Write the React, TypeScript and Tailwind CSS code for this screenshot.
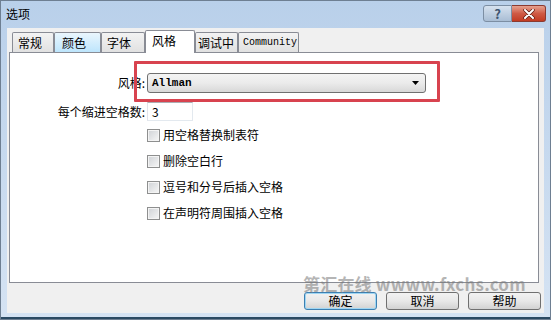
import React from "react";

const tabs = [
  { label: "常规", w: "w-[42px]", pl: "pl-[5px]" },
  { label: "颜色", w: "w-[47px]", pl: "pl-[7px]", hover: true },
  { label: "字体", w: "w-[44px]", pl: "pl-[5px]" },
  { label: "风格", w: "w-[50px]", pl: "pl-[6px]", active: true },
  { label: "调试中", w: "w-[43px]", pl: "pl-[2px]" },
  { label: "Community", w: "w-[61px]", pl: "pl-[4px]", mono: true },
];

const options = ["用空格替换制表符", "删除空白行", "逗号和分号后插入空格", "在声明符周围插入空格"];

function Tab({ t }: { t: (typeof tabs)[number] }) {
  const base = `flex items-center border border-[#898c95] border-b-0 rounded-t-[2px] leading-none text-black whitespace-nowrap ${t.pl} ${t.w}`;
  if (t.active)
    return <div className={`${base} h-[23px] -mb-px bg-white relative z-10 pb-[3px] text-[12px]`}>{t.label}</div>;
  return (
    <div
      className={`${base} h-[20px] ${
        t.hover
          ? "bg-gradient-to-b from-[#eaf6fd] to-[#bde5fc] border-[#3c7fb1]"
          : "bg-gradient-to-b from-[#f3f3f3] to-[#e1e1e1]"
      } ${t.mono ? "font-['Liberation_Mono',monospace] text-[10px]" : "text-[12px]"}`}
    >
      {t.label}
    </div>
  );
}

function Button({ label, primary }: { label: string; primary?: boolean }) {
  return (
    <div
      className={`w-[73px] h-[18px] flex items-center justify-center rounded-[3px] border text-[12px] leading-none bg-gradient-to-b from-[#f2f2f2] via-[#e8e8e8] to-[#d2d2d2] ${
        primary ? "border-[#3c7fb1] shadow-[inset_0_0_0_1px_#9fd6f3]" : "border-[#707070]"
      }`}
    >
      {label}
    </div>
  );
}

export default function App() {
  return (
    <div className="relative w-[551px] h-[320px] overflow-hidden bg-gradient-to-b from-[#b9d0ea] to-[#d5e3f3] border border-[#6e7f92] font-['Noto_Sans_CJK_SC','Noto_Sans',sans-serif] text-black">
      {/* title bar */}
      <div className="flex h-[27px] items-start pl-[5px] pr-[4px]">
        <div className="mt-[6px] text-[12px] leading-[14px]">选项</div>
        <div className="ml-auto mt-[4px] flex">
          <div className="w-[29px] h-[17px] flex items-center justify-center rounded-l-[3px] border border-[#7c8ea3] bg-gradient-to-b from-[#d6e2ef] to-[#a9bdd4] text-[13px] font-bold leading-none text-[#3e5570]">
            ?
          </div>
          <div className="w-[34px] h-[17px] flex items-center justify-center rounded-r-[3px] border border-l-0 border-[#8b3a30] bg-gradient-to-b from-[#e5a18f] via-[#cf5a45] to-[#c23b22]">
            <svg width="12" height="10" viewBox="0 0 12 10">
              <path d="M2 1 L10 9 M10 1 L2 9" stroke="#5a1a10" strokeWidth="3.4" strokeLinecap="round" />
              <path d="M2 1 L10 9 M10 1 L2 9" stroke="#ffffff" strokeWidth="2" strokeLinecap="round" />
            </svg>
          </div>
        </div>
      </div>

      {/* client area */}
      <div className="mx-[6px] h-[285px] bg-[#f0f0f0] flex flex-col pt-[2px]">
        <div className="flex items-end h-[22px] pl-[5px]">
          {tabs.map((t) => (
            <Tab key={t.label} t={t} />
          ))}
        </div>

        <div className="ml-[2px] mr-[5px] h-[231px] bg-white border border-[#898c95] pt-[20px] text-[12px]">
          <div className="flex items-center h-[20px]">
            <div className="w-[135px] text-right leading-none">风格:</div>
            <div className="ml-[2px] w-[279px] h-[20px] flex items-center rounded-[3px] border border-[#707070] bg-gradient-to-b from-[#f4f4f4] via-[#ebebeb] to-[#d8d8d8] pl-[4px] pr-[6px]">
              <span className="font-['Liberation_Mono',monospace] text-[11px] font-bold leading-none">Allman</span>
              <svg className="ml-auto" width="7" height="4" viewBox="0 0 7 4">
                <path d="M0 0 H7 L3.5 4 Z" fill="#000" />
              </svg>
            </div>
          </div>

          <div className="flex items-center h-[19px] mt-[9px]">
            <div className="w-[135px] text-right leading-none">每个缩进空格数:</div>
            <div className="ml-[2px] w-[46px] h-[19px] flex items-center border border-[#e3e9ef] border-t-[#abadb3] border-l-[#e2e3ea] pl-[4px] leading-none">
              3
            </div>
          </div>

          <div className="flex flex-col pl-[137px] mt-[1px]">
            {options.map((o) => (
              <div key={o} className="flex items-center h-[26px] gap-[3px]">
                <div className="w-[13px] h-[13px] border border-[#8e8f8f] bg-gradient-to-br from-[#cfd2d6] to-[#f7f7f7] shadow-[inset_0_0_0_1px_#f4f4f4]" />
                <span className="leading-none">{o}</span>
              </div>
            ))}
          </div>
        </div>

        <div className="flex justify-end gap-[9px] pr-[3px] mt-[9px]">
          <Button label="确定" primary />
          <Button label="取消" />
          <Button label="帮助" />
        </div>
      </div>

      <div className="h-[4px]" />
      <div className="h-[2px] bg-[#2b4a63]" />

      {/* annotation + watermark overlays */}
      <div className="absolute left-[133px] top-[60px] w-[306px] h-[41px] border-[3px] border-[#d8434f] rounded-[1px]" />
      <div className="absolute left-[302px] top-[273px] text-[17px] font-bold leading-[20px] text-[#7a7a7a] opacity-55 tracking-[0.2px]">
        第汇在线 wwww.fxchs.com
      </div>
    </div>
  );
}
